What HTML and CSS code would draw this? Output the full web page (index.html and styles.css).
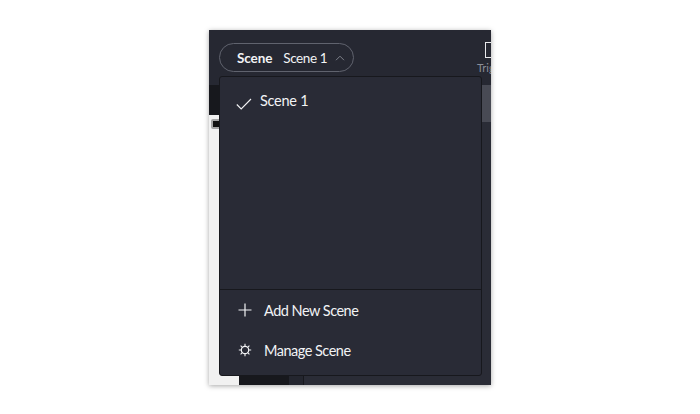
FILE: index.html
```html
<!DOCTYPE html>
<html lang="en">
<head>
<meta charset="utf-8">
<title>Scene menu</title>
<link rel="stylesheet" href="styles.css">
</head>
<body>
<div class="window">
  <header class="toolbar">
    <button class="scene-pill">
      <span class="pill-label">Scene</span>
      <span class="pill-value">Scene 1</span>
      <svg class="chevron" width="10" height="6" viewBox="0 0 10 6"><path d="M1 5.200 5 1.200 9 5.200" fill="none" stroke="#7d808a" stroke-width="1"/></svg>
    </button>
    <div class="tool">
      <span class="tool-icon"></span>
      <span class="tool-label">Trigger</span>
    </div>
  </header>
  <div class="workspace">
    <div class="left-col">
      <div class="left-head"></div>
      <div class="canvas">
        <span class="canvas-chip"></span>
      </div>
    </div>
    <div class="dark-col"></div>
    <div class="mid-col"></div>
    <div class="right-col"><div class="scroll-thumb"></div></div>
  </div>
  <div class="menu">
    <div class="menu-list">
      <div class="menu-item selected">
        <svg class="check" width="16" height="12" viewBox="0 0 16 12"><path d="M.8 6.500 5.200 11 15 1" fill="none" stroke="#f2f3f5" stroke-width="1.100"/></svg>
        <span>Scene 1</span>
      </div>
    </div>
    <div class="menu-actions">
      <div class="action">
        <svg class="action-icon" width="14" height="14" viewBox="0 0 14 14"><path d="M7 .5v13M.5 7h13" fill="none" stroke="#f2f3f5" stroke-width="1.200"/></svg>
        <span>Add New Scene</span>
      </div>
      <div class="action">
        <svg class="action-icon" width="14" height="14" viewBox="0 0 14 14"><circle cx="7" cy="7" r="3.700" fill="none" stroke="#f2f3f5" stroke-width="1.200"/><path d="M7 .8v2.400M7 10.800v2.400M.8 7h2.400M10.800 7h2.400M2.600 2.600l1.700 1.700M9.700 9.700l1.700 1.700M2.600 11.400l1.700-1.700M9.700 4.300l1.700-1.700" fill="none" stroke="#f2f3f5" stroke-width="1.100"/></svg>
        <span>Manage Scene</span>
      </div>
    </div>
  </div>
</div>
</body>
</html>
```
FILE: styles.css
```css
* { box-sizing: border-box; }
html, body { margin: 0; height: 100%; background: #fff; }
body { padding: 30px 0 0 209px; font-family: "Lato", "Noto Sans", sans-serif; }

.window {
  position: relative;
  width: 282px;
  height: 355px;
  display: flex;
  flex-direction: column;
  overflow: hidden;
  background: #24262f;
  box-shadow: 0 1px 5px rgba(0, 0, 0, .35);
}

.toolbar {
  height: 55px;
  flex: none;
  display: flex;
  align-items: flex-start;
  justify-content: space-between;
  padding: 13px 0 0 10px;
  background: #262832;
}

.scene-pill {
  width: 135px;
  height: 29px;
  display: flex;
  align-items: center;
  padding: 0 0 0 17px;
  background: transparent;
  border: 1px solid #60636e;
  border-radius: 15px;
  font: inherit;
  color: #f2f3f5;
  font-size: 13.5px;
}
.pill-label { font-weight: 700; letter-spacing: -.1px; }
.pill-value { margin-left: 11px; letter-spacing: -.4px; }
.chevron { margin-left: 8px; }

.tool {
  width: 6px;
  display: flex;
  flex-direction: column;
  margin-top: -1px;
}
.tool-icon {
  width: 16px;
  height: 16px;
  border: 1px solid #e8e9ec;
  flex: none;
}
.tool-label {
  margin: 3px 0 0 -8px;
  color: #8b8e98;
  font-size: 11px;
  line-height: 14px;
  white-space: nowrap;
}

.workspace { flex: 1; display: flex; min-height: 0; }

.left-col { width: 30px; display: flex; flex-direction: column; background: #17181d; }
.left-head { height: 30px; background: #17181d; flex: none; }
.canvas { flex: 1; background: #f1f1f1; position: relative; }
.canvas-chip {
  position: absolute;
  left: 2px;
  top: 4px;
  width: 12px;
  height: 10px;
  background: #111;
  border: 2px solid #a5a5a5;
  border-radius: 2px;
}
.dark-col { width: 50px; background: #17181d; }
.mid-col { width: 15px; background: #24262f; border-right: 1px solid #17181d; }
.right-col { flex: 1; background: #2a2c36; display: flex; justify-content: flex-end; }
.scroll-thumb { width: 10px; height: 37px; background: #484a54; }

.menu {
  position: absolute;
  left: 10px;
  top: 46px;
  width: 263px;
  height: 300px;
  display: flex;
  flex-direction: column;
  background: #292b36;
  border: 1px solid #17181d;
  border-radius: 3px;
  color: #f2f3f5;
  font-size: 14.5px;
  letter-spacing: -.5px;
}
.menu-list { flex: 1; padding: 12px 0 0 16px; }
.menu-item { display: flex; align-items: center; height: 22px; letter-spacing: -.25px; }
.check { margin: 8px 8px 0 0; flex: none; }

.menu-actions {
  height: 86px;
  flex: none;
  border-top: 1px solid #17181d;
  padding: 0 0 0 18px;
}
.action { height: 40px; display: flex; align-items: center; }
.action-icon { margin-right: 12px; flex: none; }
```
